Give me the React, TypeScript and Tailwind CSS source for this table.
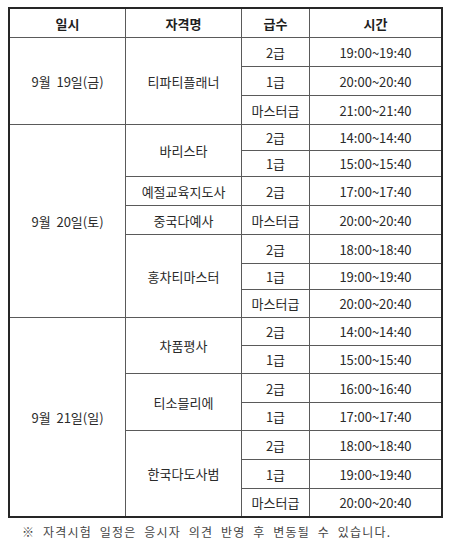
import React from "react";

type Cell = { text: string; span?: number; bold?: boolean };

const rows: Cell[][] = [
  [
    { text: "일시", bold: true },
    { text: "자격명", bold: true },
    { text: "급수", bold: true },
    { text: "시간", bold: true },
  ],
  [{ text: "9월  19일(금)", span: 3 }, { text: "티파티플래너", span: 3 }, { text: "2급" }, { text: "19:00~19:40" }],
  [{ text: "1급" }, { text: "20:00~20:40" }],
  [{ text: "마스터급" }, { text: "21:00~21:40" }],
  [{ text: "9월  20일(토)", span: 7 }, { text: "바리스타", span: 2 }, { text: "2급" }, { text: "14:00~14:40" }],
  [{ text: "1급" }, { text: "15:00~15:40" }],
  [{ text: "예절교육지도사" }, { text: "2급" }, { text: "17:00~17:40" }],
  [{ text: "중국다예사" }, { text: "마스터급" }, { text: "20:00~20:40" }],
  [{ text: "홍차티마스터", span: 3 }, { text: "2급" }, { text: "18:00~18:40" }],
  [{ text: "1급" }, { text: "19:00~19:40" }],
  [{ text: "마스터급" }, { text: "20:00~20:40" }],
  [{ text: "9월  21일(일)", span: 7 }, { text: "차품평사", span: 2 }, { text: "2급" }, { text: "14:00~14:40" }],
  [{ text: "1급" }, { text: "15:00~15:40" }],
  [{ text: "티소믈리에", span: 2 }, { text: "2급" }, { text: "16:00~16:40" }],
  [{ text: "1급" }, { text: "17:00~17:40" }],
  [{ text: "한국다도사범", span: 3 }, { text: "2급" }, { text: "18:00~18:40" }],
  [{ text: "1급" }, { text: "19:00~19:40" }],
  [{ text: "마스터급" }, { text: "20:00~20:40" }],
];

function spanClass(n?: number) {
  switch (n) {
    case 2:
      return "row-span-2";
    case 3:
      return "row-span-3";
    case 7:
      return "row-span-7";
    default:
      return "";
  }
}

export default function App() {
  return (
    <div
      className="w-[453px] h-[544px] bg-white overflow-hidden pt-[7px] pl-[8px]"
      style={{ fontFamily: '"Noto Sans CJK KR", "Noto Sans", sans-serif' }}
    >
      <div className="grid w-fit gap-px bg-[#5a5a5a] border-2 border-[#262626] grid-cols-[115px_115px_67px_131px] grid-rows-[28px_28px_28px_28px_25px_25px_28px_28px_28px_25px_27px_27px_27px_28px_27px_28px_28px_27px]">
        {rows.flatMap((row, ri) =>
          row.map((c, ci) => (
            <div
              key={`${ri}-${ci}`}
              className={`bg-white flex items-center justify-center text-[13px] leading-none whitespace-pre ${spanClass(
                c.span
              )} ${c.bold ? "font-bold text-[#1e1e1e]" : "text-[#2a2a2a]"}`}
            >
              {c.text}
            </div>
          ))
        )}
      </div>
      <div className="mt-[6px] pl-[14px] text-[12px] leading-[16px] tracking-[1.2px] text-[#444] whitespace-pre">
        <span className="font-bold">※</span>  자격시험  일정은  응시자  의견  반영  후  변동될  수  있습니다.
      </div>
    </div>
  );
}
